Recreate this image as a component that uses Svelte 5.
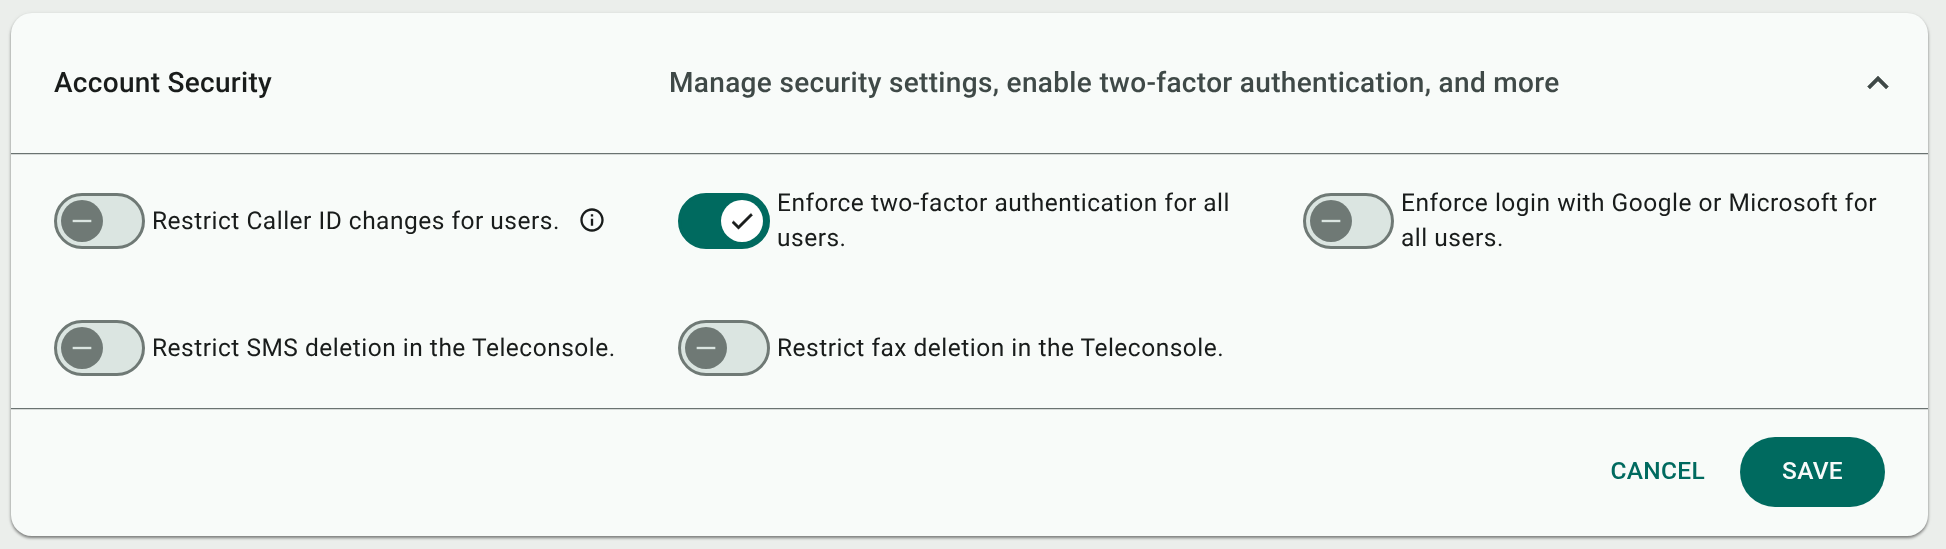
<script lang="ts">
  const settings = [
    { label: 'Restrict Caller ID changes for users.', on: false, info: true },
    { label: 'Enforce two-factor authentication for all users.', on: true, info: false },
    { label: 'Enforce login with Google or Microsoft for all users.', on: false, info: false },
    { label: 'Restrict SMS deletion in the Teleconsole.', on: false, info: false },
    { label: 'Restrict fax deletion in the Teleconsole.', on: false, info: false }
  ];
  let items = $state(settings);
</script>

<main class="page">
  <section class="card">
    <header class="head">
      <h2 class="title">Account Security</h2>
      <p class="desc">Manage security settings, enable two-factor authentication, and more</p>
      <svg class="chevron" viewBox="0 0 24 24" aria-hidden="true">
        <path d="M12 8l-6 6 1.41 1.41L12 10.83l4.59 4.58L18 14z" />
      </svg>
    </header>

    <div class="grid">
      {#each items as item}
        <label class="row">
          <button
            class="switch"
            class:on={item.on}
            type="button"
            role="switch"
            aria-checked={item.on}
            aria-label={item.label}
            onclick={() => (item.on = !item.on)}
          >
            <span class="thumb">
              <svg viewBox="0 0 24 24" aria-hidden="true">
                {#if item.on}
                  <path d="M9 16.17L4.83 12l-1.42 1.41L9 19 21 7l-1.41-1.41z" />
                {:else}
                  <path d="M4 11h16v2H4z" />
                {/if}
              </svg>
            </span>
          </button>
          <span class="text">{item.label}</span>
          {#if item.info}
            <svg class="info" viewBox="0 0 24 24" aria-hidden="true">
              <path d="M11 7h2v2h-2zm0 4h2v6h-2zm1-9C6.48 2 2 6.48 2 12s4.48 10 10 10 10-4.48 10-10S17.52 2 12 2zm0 18c-4.41 0-8-3.59-8-8s3.59-8 8-8 8 3.59 8 8-3.59 8-8 8z" />
            </svg>
          {/if}
        </label>
      {/each}
    </div>

    <footer class="foot">
      <button class="btn text-btn" type="button">Cancel</button>
      <button class="btn save" type="button">Save</button>
    </footer>
  </section>
</main>

<style>
  :global(body) {
    background: #ebeeeb;
  }
  .page {
    padding: 13px 18px 13px 11px;
    font-family: Roboto, "Liberation Sans", sans-serif;
    color: #191c1b;
    text-rendering: geometricPrecision;
    will-change: transform;
  }
  .card {
    background: #f8fbf9;
    border-radius: 21px;
    box-shadow: 0 2px 3px rgba(0, 0, 0, 0.45), 0 1px 5px rgba(0, 0, 0, 0.08);
  }
  .head {
    display: grid;
    grid-template-columns: 615px 1fr 42px;
    align-items: center;
    height: 139px;
    padding: 0 29px 1px 43px;
    border-bottom: 1px solid #6a7371;
    box-shadow: 0 1px 0 rgba(111, 121, 118, 0.25);
    box-sizing: content-box;
  }
  .title {
    margin: 0;
    font-size: 28px;
    font-weight: 500;
    letter-spacing: 0.3px;
  }
  .desc {
    margin: 0;
    font-size: 28px;
    font-weight: 500;
    letter-spacing: 0.33px;
    color: #3f4947;
  }
  .chevron {
    width: 42px;
    height: 42px;
    margin-top: 1px;
    fill: #3f4947;
    stroke: #3f4947;
    stroke-width: 0.3;
  }
  .grid {
    display: grid;
    grid-template-columns: 624px 625px 624px;
    grid-auto-rows: 70px;
    row-gap: 57px;
    padding: 32px 0 25px 43px;
    border-bottom: 1px solid #6a7371;
    box-shadow: 0 1px 0 rgba(111, 121, 118, 0.25);
  }
  .row {
    display: flex;
    align-items: center;
    gap: 7px;
    padding-right: 38px;
  }
  .switch {
    flex: none;
    display: flex;
    align-items: center;
    width: 91px;
    height: 56px;
    padding: 0 0 0 4px;
    box-sizing: border-box;
    background: #dbe5e1;
    border: 3.5px solid #6f7975;
    border-radius: 28px;
  }
  .row:nth-child(3n + 2) .switch {
    width: 92px;
  }
  .thumb {
    display: flex;
    align-items: center;
    justify-content: center;
    width: 42px;
    height: 42px;
    border-radius: 50%;
    background: #6f7975;
  }
  .thumb svg {
    width: 28px;
    height: 28px;
    fill: #dbe5e1;
  }
  .switch.on {
    justify-content: flex-end;
    padding: 0 4.5px 0 0;
    background: #006a5f;
    border-color: #006a5f;
  }
  .switch.on .thumb {
    background: #fff;
  }
  .switch.on .thumb svg {
    fill: #191c1b;
    stroke: #191c1b;
    stroke-width: 0.5;
  }
  .text {
    margin-top: -2px;
    font-size: 24.5px;
    line-height: 35px;
    letter-spacing: 0.5px;
  }
  .info {
    flex: none;
    width: 28px;
    height: 28px;
    margin: -3px 0 0 11px;
    fill: #191c1b;
  }
  .foot {
    display: flex;
    justify-content: flex-end;
    align-items: center;
    gap: 14px;
    padding: 28px 43px 29px 0;
  }
  .btn {
    height: 70px;
    border: 0;
    border-radius: 35px;
    font-family: inherit;
    font-size: 24.5px;
    font-weight: 500;
    letter-spacing: 0.3px;
    text-transform: uppercase;
  }
  .text-btn {
    padding: 0 21px 3px;
    background: transparent;
    color: #006a5f;
  }
  .save {
    width: 145px;
    padding: 0 0 3px;
    background: #006a5f;
    color: #f8fbfa;
  }
</style>
